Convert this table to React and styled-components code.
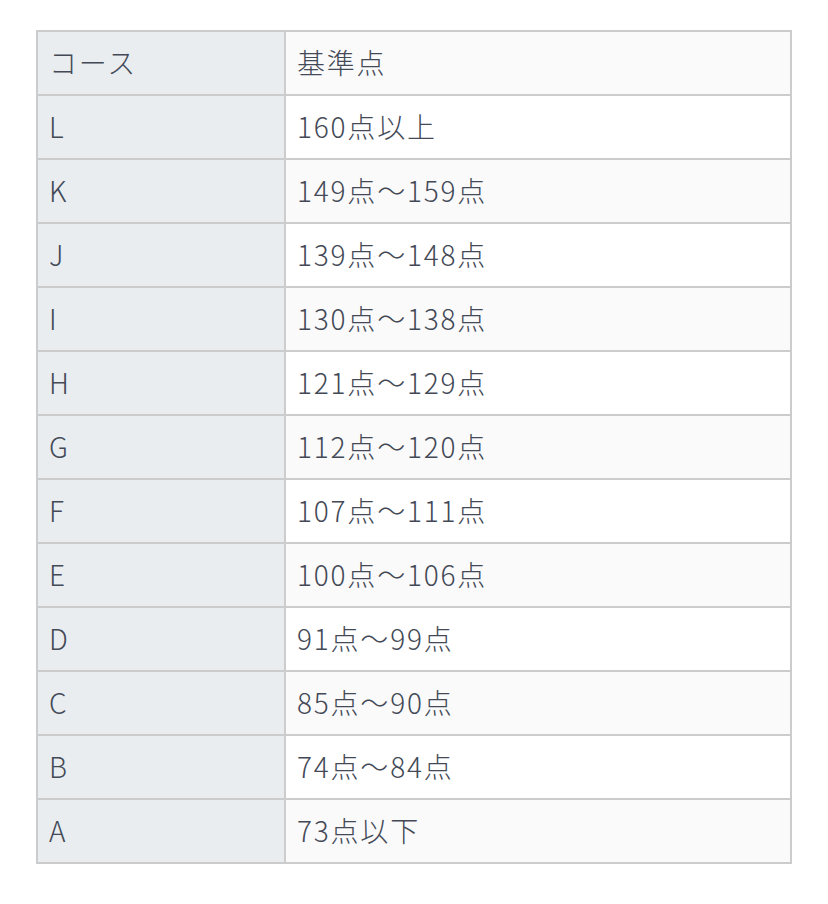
import React from "react";
import styled, { createGlobalStyle } from "styled-components";

const Global = createGlobalStyle`
  html, body { margin: 0; padding: 0; background: #ffffff; }
  body { font-family: "Noto Sans CJK JP", "Noto Sans", sans-serif; }
`;

const Page = styled.div`
  padding: 30px 36px;
`;

const Table = styled.table`
  width: 100%;
  border-collapse: collapse;
  border: 2px solid #cccccc;
  color: #434956;
  font-size: 28px;
  font-weight: 300;
`;

const Row = styled.tr`
  height: 64px;
`;

const Cell = styled.td`
  border: 2px solid #cccccc;
  padding: 0 11px;
  vertical-align: middle;
  line-height: 1.2;
  letter-spacing: 1.8px;
  background: ${(p) => (p.$head ? "#e9edf0" : p.$alt ? "#fafafa" : "#ffffff")};
  width: ${(p) => (p.$head ? "224px" : "auto")};
`;

const rows = [
  ["コース", "基準点"],
  ["L", "160点以上"],
  ["K", "149点～159点"],
  ["J", "139点～148点"],
  ["I", "130点～138点"],
  ["H", "121点～129点"],
  ["G", "112点～120点"],
  ["F", "107点～111点"],
  ["E", "100点～106点"],
  ["D", "91点～99点"],
  ["C", "85点～90点"],
  ["B", "74点～84点"],
  ["A", "73点以下"],
];

export default function App() {
  return (
    <Page>
      <Global />
      <Table>
        <tbody>
          {rows.map(([a, b], i) => (
            <Row key={a}>
              <Cell $head>{a}</Cell>
              <Cell $alt={i % 2 === 0}>{b}</Cell>
            </Row>
          ))}
        </tbody>
      </Table>
    </Page>
  );
}
